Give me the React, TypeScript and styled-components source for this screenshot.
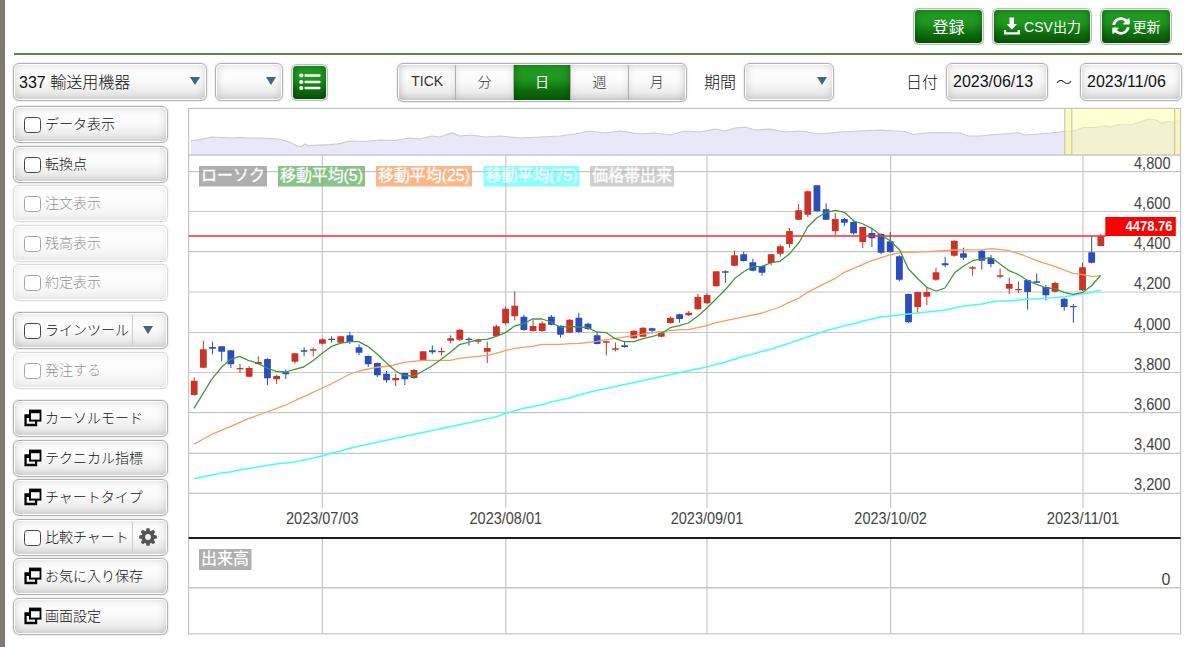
import React from "react";
import styled, { createGlobalStyle, css } from "styled-components";
import { FaSyncAlt } from "react-icons/fa";

const sans = `"Liberation Sans", "Noto Sans CJK JP", sans-serif`;

const Global = createGlobalStyle`
  * { box-sizing: border-box; }
  body { margin: 0; background: #fff; font-family: ${sans}; font-weight: 300; overflow: hidden; }
`;

const Page = styled.div`
  width: 1200px;
  height: 647px;
  border-left: 5px solid #7d7a74;
  background: #fff;
  padding-left: 8px;
  color: #222;
`;

const Header = styled.header`
  display: flex;
  justify-content: flex-end;
  align-items: flex-start;
  gap: 8px;
  height: 55px;
  width: 1168px;
  margin-left: 1px;
  padding: 8px 10px 0 0;
  border-bottom: 2px solid #66804a;
`;

const greenFace = css`
  background: linear-gradient(#22a022 0%, #1e961e 40%, #0e6a0e 75%, #065c06 100%);
  box-shadow: inset 0 0 7px rgba(0, 50, 0, 0.55), 0 0 0 1px #e8e8e8, 0 0 1px 2px #b5b5b5;
  color: #fff;
`;

const whiteFace = css`
  background: linear-gradient(#fff 0%, #fbfbfb 45%, #e9e9e9 85%, #e2e2e2 100%);
  border: 1.5px solid #b2b2b2;
  box-shadow: inset 0 0 0 1px #fff, inset 0 0 9px 1px rgba(0, 0, 0, 0.16), 0 0 2px rgba(0, 0, 0, 0.22);
`;

const GreenButton = styled.button<{ $w: number; $size?: number }>`
  ${greenFace}
  display: flex;
  align-items: center;
  justify-content: center;
  gap: 3px;
  width: ${(p) => p.$w - 4}px;
  height: 33px;
  margin: 2px;
  padding: 0 0 2px;
  border: 0;
  border-radius: 4px;
  font: ${(p) => p.$size ?? 14}px ${sans};
  white-space: nowrap;
`;

const Toolbar = styled.div`
  display: flex;
  align-items: center;
  height: 38px;
  margin-top: 8px;
  width: 1169px;
  font-size: 16px;
`;

const Field = styled.div<{ $w: number; $ml?: number }>`
  ${whiteFace}
  display: flex;
  align-items: center;
  justify-content: space-between;
  width: ${(p) => p.$w}px;
  height: 38px;
  margin-left: ${(p) => p.$ml ?? 0}px;
  padding: 0 6px 2px 5px;
  border-radius: 6px;
  color: #111;
  white-space: nowrap;
`;

const DateField = styled(Field)`
  padding: 0 0 0 6px;
`;

const Caption = styled.span<{ $ml: number }>`
  margin-left: ${(p) => p.$ml}px;
  padding-bottom: 3px;
  color: #111;
`;

const Spacer = styled.span`
  flex: 1;
`;

const ListButton = styled.button`
  ${greenFace}
  display: grid;
  place-items: center;
  width: 33px;
  height: 33px;
  margin-left: 10px;
  padding: 0;
  border: 0;
  border-radius: 4px;
`;

const Segments = styled.div`
  ${whiteFace}
  display: flex;
  width: 290px;
  height: 39px;
  margin-left: 71px;
  border-radius: 6px;
  padding: 1px;
`;

const Segment = styled.button<{ $on?: boolean }>`
  flex: 1;
  padding: 0 0 2px;
  border: 0;
  border-right: 1.5px solid #b0b0b0;
  background: none;
  box-shadow: inset 0 0 7px rgba(0, 0, 0, 0.1);
  color: #333;
  font: 300 14px ${sans};
  &:last-child { border-right: 0; }
  ${(p) => p.$on && css`
    background: linear-gradient(#22a022, #1e961e 40%, #0e6a0e 75%, #065c06);
    box-shadow: inset 0 0 7px rgba(0, 50, 0, 0.5);
    color: #fff;
    font-weight: 400;
  `}
`;

const Body = styled.div`
  display: flex;
  align-items: flex-start;
  margin-top: 5px;
`;

const Sidebar = styled.nav`
  display: flex;
  flex-direction: column;
  gap: 11px;
  width: 155px;
`;

const Group = styled.div`
  display: flex;
  flex-direction: column;
  gap: 2.6px;
`;

const SideButton = styled.div<{ $off?: boolean }>`
  ${whiteFace}
  display: flex;
  align-items: center;
  height: 37px;
  padding: 0 0 3px 9px;
  border-radius: 6px;
  font-size: 14px;
  color: #111;
  white-space: nowrap;
  opacity: ${(p) => (p.$off ? 0.48 : 1)};
`;

const Box = styled.span`
  flex: none;
  width: 17px;
  height: 16px;
  margin: 4px 4px 0 1px;
  border: 1.4px solid #444;
  border-radius: 3.5px;
  background: #fff;
`;

const Extra = styled.span`
  display: flex;
  align-items: center;
  justify-content: center;
  align-self: stretch;
  width: 31px;
  margin: 2px 4px 0 auto;
  border-left: 1px solid #ccc;
`;

const Triangle = styled.span`
  border: 5.5px solid transparent;
  border-top: 8px solid #4a5f85;
  border-bottom: 0;
`;

const ChartSvg = styled.svg`
  display: block;
  margin-left: 19px;
  font-family: ${sans};
`;

const Windows = styled.svg`
  margin: 2px 3px 0 1px;
  flex: none;
`;

const WindowsIcon = () => (
  <Windows width="18" height="18" viewBox="0 0 18 18">
    <path d="M0.4 5.2H6V9H2.7V14.8H11V11.5H13.2V17.2H0.4Z" fill="#050505" />
    <rect x="5" y="0.6" width="12.4" height="12" fill="#050505" />
    <rect x="7" y="4.2" width="8.6" height="6.4" fill="#f7f7f7" />
  </Windows>
);

const GearIcon = () => (
  <svg width="20" height="20" viewBox="-10 -10 20 20">
    {[0, 45, 90, 135].map((a) => (
      <path key={a} transform={`rotate(${a})`} d="M-2.3 -5L-1.5 -8.8H1.5L2.3 -5V5L1.5 8.8H-1.5L-2.3 5Z" fill="#555" />
    ))}
    <circle r="6.6" fill="#555" />
    <circle r="2.9" fill="#f0f0f0" />
  </svg>
);

const ListIcon = () => (
  <svg width="22" height="18" viewBox="0 0 22 18">
    {[2.5, 9, 15].map((y) => (
      <g key={y} fill="#fff">
        <circle cx="2.3" cy={y} r="2.1" />
        <rect x="5.5" y={y - 1.3} width="16" height="2.6" rx="0.8" />
      </g>
    ))}
  </svg>
);

const DownloadIcon = () => (
  <svg width="18" height="18" viewBox="0 0 18 18" fill="#fff">
    <path d="M6.5 0.5H11V7H14L8.8 12.5L3.5 7H6.5Z" />
    <path d="M1 13H3.2V15.2H14.6V13H17V17.5H1Z" />
  </svg>
);

type Item = { label: string; kind: "check" | "window"; off?: boolean; extra?: "menu" | "gear" };

const groups: Item[][] = [
  [
    { label: "データ表示", kind: "check" },
    { label: "転換点", kind: "check" },
    { label: "注文表示", kind: "check", off: true },
    { label: "残高表示", kind: "check", off: true },
    { label: "約定表示", kind: "check", off: true },
  ],
  [
    { label: "ラインツール", kind: "check", extra: "menu" },
    { label: "発注する", kind: "check", off: true },
  ],
  [
    { label: "カーソルモード", kind: "window" },
    { label: "テクニカル指標", kind: "window" },
    { label: "チャートタイプ", kind: "window" },
    { label: "比較チャート", kind: "check", extra: "gear" },
    { label: "お気に入り保存", kind: "window" },
    { label: "画面設定", kind: "window" },
  ],
];

// Candles: direction, body top, body bottom, high, low. Each block has its own
// vertical origin and the values are thirds of a pixel below it.
type Candle = ["R" | "B", number, number, number, number];
const blocks: { y: number; rows: Candle[] }[] = [
  { y: 290, rows: [
    ["R",272,315,262,317],["R",178,233,152,235],["B",171,176,155,193],["B",169,185,169,214],["B",181,223,181,234],
    ["R",234,238,222,249],["R",234,260,229,262],["R",216,222,199,224],["B",207,265,205,285],["R",258,268,254,282],
    ["B",247,253,238,267],["R",190,215,189,221],["B",181,185,172,199],["R",178,182,172,199],["R",148,161,145,163],
    ["B",146,150,139,158],["R",139,158,138,160],["B",136,156,125,162],["B",172,188,163,195],["B",198,223,196,231],
    ["B",219,256,217,261],["B",251,271,243,278],
  ] },
  { y: 270, rows: [
    ["R",324,331,311,348],["B",309,328,309,345],["R",300,324,297,327],["R",244,270,244,271],["B",241,247,226,252],
    ["R",243,247,233,257],["R",205,212,196,220],["R",179,209,177,213],["B",206,210,202,227],["R",211,215,206,222],
    ["R",234,245,215,279],["R",169,198,164,200],["R",116,160,109,163],["R",107,139,64,151],["B",140,180,134,182],
    ["R",168,183,149,185],["R",160,183,154,185],["B",140,164,135,166],["B",167,194,166,203],["R",149,188,147,189],
    ["B",143,186,128,190],["B",161,177,158,180],
  ] },
  { y: 220, rows: [
    ["B",346,372,338,373],["R",364,368,362,406],["R",385,389,368,394],["B",376,381,363,383],["R",332,355,331,356],
    ["R",323,350,322,351],["B",325,332,323,341],["R",339,350,334,352],["R",293,309,290,311],["B",283,297,281,308],
    ["R",278,286,273,288],["R",231,268,222,269],["R",225,250,220,252],["R",154,199,154,200],["B",154,158,151,188],
    ["R",106,137,92,139],["B",103,123,95,125],["B",127,152,116,154],["B",138,158,136,167],["R",103,129,102,136],
  ] },
  { y: 170, rows: [
    ["R",229,251,224,260],["R",183,222,174,233],["R",121,149,102,150],["R",64,134,61,141],["B",46,124,46,125],
    ["B",118,149,100,150],["R",147,184,129,197],["B",147,158,144,168],["B",156,190,154,194],["R",171,216,171,234],
    ["B",189,205,173,231],["B",192,248,190,253],["B",214,246,186,248],["B",259,329,256,334],["B",372,457,371,459],
  ] },
  { y: 200, rows: [
    ["R",276,321,275,338],["R",276,290,263,315],["R",217,239,203,243],["B",190,196,170,202],["R",122,167,121,170],
    ["B",160,173,143,180],["R",202,206,198,227],["B",152,182,150,209],["B",174,192,165,202],["R",226,230,206,235],
    ["R",252,266,233,282],["R",267,271,244,279],["B",240,276,239,329],["B",244,248,220,249],["B",261,286,255,300],
    ["R",249,275,245,277],["B",296,321,294,332],["B",318,322,312,368],["R",202,271,188,273],["B",157,188,108,190],
    ["R",108,138,102,139],
  ] },
];

const candles = blocks
  .flatMap((b) => b.rows.map(([c, ...v]) => ({ c, v: v.map((n) => b.y + n / 3) })))
  .map((k, i) => ({ ...k, x: 194.2 + i * 9.158 }));

// Line series use the same block form, with a horizontal origin as well.
type Seg = [number, number, number[]];
const line = (segs: Seg[]) =>
  segs
    .flatMap(([ox, oy, p]) =>
      p.flatMap((n, i) => (i % 2 ? [] : [`${(ox + n / 3).toFixed(1)},${(oy + p[i + 1] / 3).toFixed(1)}`]))
    )
    .join(" ");

const ma5 = line([
  [180, 290, [42,355,69,311,95,268,125,231,151,209,178,199,205,211,234,220,261,234,288,244,317,246,344,238,371,231,397,214,427,190,453,170,480,160,510,155,536,155,563,169,589,190]],
  [380, 270, [19,278,46,302,72,317,102,318,129,303,155,288,181,270,211,247,238,224,265,217,294,209,321,208,348,199,378,187,404,168,431,161,457,147,487,147,513,156,540,172,570,169,596,171]],
  [570, 220, [53,323,80,336,109,338,136,356,163,365,192,365,219,356,245,350,272,342,301,323,328,317,355,309,384,288,411,264,438,237,465,210,495,175,521,155,547,140,577,139]],
  [740, 170, [94,278,120,274,147,253,177,218,203,171,230,144,259,127,286,121,313,127,342,153,369,162,395,175,422,195,452,213,479,240]],
  [890, 200, [55,206,85,238,112,263,138,273,165,264,194,218,221,198,248,182,277,176,304,173,331,193,357,212,386,224,414,242,440,253,469,264,496,266,522,277,549,283,579,277,606,256,632,226]],
]);
const ma25 = line([
  [180, 290, [42,463,95,433,151,410,205,386,261,366,288,356,317,345,371,320,427,294,453,282,510,252,536,243,589,232]],
  [380, 270, [0,291,30,288,72,277,129,271,211,271,238,265,321,256,348,250,378,241,404,235,457,229,487,223,540,223]],
  [570, 220, [0,371,30,370,80,364,109,359,192,347,245,338,328,329,355,329,411,317,438,308]],
  [740, 170, [0,443,67,429,120,411,147,397,177,384,203,367,259,338,286,325,313,307,395,272,452,254,479,248]],
  [890, 200, [55,157,112,155,194,150,277,149,304,146,357,152,386,161,414,171,440,182,496,200,549,220,579,224,606,230,632,227]],
]);
const ma75 = line([
  [180, 290, [42,566,125,549,151,546,178,540,288,522,344,516,427,498,453,490,480,484,510,475,536,469,619,451]],
  [380, 270, [305,450,348,440,378,430,431,415,487,404,513,396,570,383]],
  [570, 220, [60,516,365,450,411,441,438,433,465,427,521,409,547,403,577,394,603,388]],
  [740, 170, [265,480,286,475,313,467,342,461,369,453,422,441]],
  [890, 200, [0,348,55,342,85,339,165,330,221,318,277,312,304,306,331,303,357,303,414,297,440,297,522,290,579,281,606,277,632,271]],
]);

const overview =
  "191,140.7 200,139.7 212,137 222,137.5 233,138 240,137.3 247,138 260,138 277,139 283,140 290,142.3 297,146 302,146.3 305,144 308,145.6 330,144.7 340,143.7 350,141 365,141.5 380,140 395,140.5 410,138 420,139 432,136 440,137 452,133 460,136 472,135 485,137 500,136 520,138 540,137 560,136 575,134 590,131 605,133 620,131 640,134 655,133 670,135 685,131 700,132 715,129 725,131 735,128 745,127 755,130 770,129 785,132 800,131 820,134 840,132 860,131 880,130 895,131 905,131.5 913,134.5 925,133 935,132.5 960,133 968,136 980,136 995,134.5 1010,133.5 1018,132.5 1025,135 1045,133.5 1066,131.5 1075,130.5 1083,127.5 1095,127.5 1105,125.5 1110,127 1118,124.5 1130,125 1140,122 1148,119 1155,119.5 1162,123 1168,121.5 1175,122.5 1180,120";

const grid = [171.7, 211.5, 251.7, 292, 332.5, 372.5, 412.7, 453.3, 493.3];
const dates: [number, string][] = [
  [322.3, "2023/07/03"], [505.8, "2023/08/01"], [707, "2023/09/01"], [890.6, "2023/10/02"], [1083, "2023/11/01"],
];
const legends: [number, number, string, string][] = [
  [199, 68, "#a9a9a9", "ローソク"],
  [278, 87, "#7fbf7f", "移動平均(5)"],
  [376, 96, "#ffb07c", "移動平均(25)"],
  [483.5, 96, "#80ffff", "移動平均(75)"],
  [590, 84, "#cccccc", "価格帯出来"],
];

const Chart = () => (
  <ChartSvg width="996" height="530" viewBox="187 106 996 530">
    <polygon points={`191,154.5 ${overview} 1180,154.5`} fill="#e9e8f8" />
    <polyline points={overview} fill="none" stroke="#ccc" strokeWidth="1.2" />
    <rect x="1065" y="108" width="115.5" height="47" fill="#ffffa0" fillOpacity="0.45" />
    <rect x="1065" y="108" width="6.5" height="47" fill="#ffff80" fillOpacity="0.35" />
    <rect x="1174.5" y="108" width="6" height="47" fill="#ffff80" fillOpacity="0.35" />
    <g stroke="#c6c6c6" strokeWidth="1.2" fill="none">
      <path d="M1064.8 108V155M1071.8 108V155M1174.6 108V155" />
      <path d="M188.6 108.3H1180.6V633.8H188.6Z" />
      <path d="M188.6 155H1180.6M188.6 587.7H1180.6" strokeWidth="1.5" />
      {grid.map((y) => <path key={y} d={`M188.6 ${y}H1180.6`} />)}
      {dates.map(([x]) => <path key={x} d={`M${x} 155V508M${x} 539V633`} />)}
    </g>
    <path d="M188.6 537.9H1180.6" stroke="#1c1c1c" strokeWidth="2" />
    {candles.map(({ c, v, x }) => (
      <g key={x} fill={c === "R" ? "#ca3428" : "#2a4dc0"}>
        <rect x={x - 0.5} y={v[2]} width="1" height={v[3] - v[2]} />
        <rect x={x - 3.4} y={v[0]} width="6.8" height={v[1] - v[0]} rx="0.4" />
      </g>
    ))}
    <path d="M188.6 236H1106" stroke="#ff2a2a" strokeWidth="1.3" />
    <g fill="none" strokeWidth="1.3" strokeLinejoin="round">
      <polyline points={ma75} stroke="#40ffff" strokeWidth="1.5" />
      <polyline points={ma25} stroke="#ff9a5c" />
      <polyline points={ma5} stroke="#3f9a3f" />
    </g>
    {legends.map(([x, w, fill, label]) => (
      <g key={label}>
        <rect x={x} y="166" width={w} height="20.5" fill={fill} fillOpacity="0.93" />
        <text x={x + 2} y="180.5" fontSize="16" fontWeight="400" fill="#fff" stroke="#fff" strokeWidth="0.3" textLength={w - 4} lengthAdjust="spacingAndGlyphs">{label}</text>
      </g>
    ))}
    <path d="M199 171.7H267M278 171.7H365M376 171.7H472M483.5 171.7H579.5M590 171.7H674M322.3 166V186.5M505.8 166V186.5" stroke="#888" strokeOpacity="0.22" strokeWidth="1.2" />
    <rect x="199" y="549" width="52.5" height="21" fill="#b0b0b0" />
    <text x="201" y="563.5" fontSize="16" fontWeight="400" fill="#fff" stroke="#fff" strokeWidth="0.2" textLength="48">出来高</text>
    <g fontSize="16" fontWeight="400" fill="#444" textAnchor="end">
      {grid.map((y, i) => (
        <text key={y} x="1170.5" y={y - 3} textLength="36.5" lengthAdjust="spacingAndGlyphs">
          {(4800 - i * 200).toLocaleString("en-US")}
        </text>
      ))}
      <text x="1170.5" y="584.5">0</text>
    </g>
    <g fontSize="16" fill="#444" textAnchor="middle">
      {dates.map(([x, d]) => <text key={d} x={x} y="524.3" textLength="72.5" lengthAdjust="spacingAndGlyphs">{d}</text>)}
    </g>
    <rect x="1105.3" y="217" width="70.5" height="19" fill="#f00" />
    <text x="1172.5" y="231" fontSize="14" fontWeight="bold" fill="#fff" textAnchor="end" textLength="47" lengthAdjust="spacingAndGlyphs">4478.76</text>
  </ChartSvg>
);

export default function App() {
  return (
    <Page>
      <Global />
      <Header>
        <GreenButton $w={71} $size={16}>登録</GreenButton>
        <GreenButton $w={100}><DownloadIcon />CSV出力</GreenButton>
        <GreenButton $w={72}><FaSyncAlt size={18} />更新</GreenButton>
      </Header>
      <Toolbar>
        <Field $w={194}>337 輸送用機器<Triangle /></Field>
        <Field $w={68} $ml={8}><span /><Triangle /></Field>
        <ListButton><ListIcon /></ListButton>
        <Segments>
          {["TICK", "分", "日", "週", "月"].map((s) => <Segment key={s} $on={s === "日"}>{s}</Segment>)}
        </Segments>
        <Caption $ml={17}>期間</Caption>
        <Field $w={90} $ml={8}><span /><Triangle /></Field>
        <Spacer />
        <Caption $ml={0}>日付</Caption>
        <DateField $w={102} $ml={8}>2023/06/13</DateField>
        <Caption $ml={8}>～</Caption>
        <DateField $w={102} $ml={8}>2023/11/06</DateField>
      </Toolbar>
      <Body>
        <Sidebar>
          {groups.map((g, i) => (
            <Group key={i}>
              {g.map((it) => (
                <SideButton key={it.label} $off={it.off}>
                  {it.kind === "check" ? <Box /> : <WindowsIcon />}
                  {it.label}
                  {it.extra && (
                    <Extra>{it.extra === "menu" ? <Triangle /> : <GearIcon />}</Extra>
                  )}
                </SideButton>
              ))}
            </Group>
          ))}
        </Sidebar>
        <Chart />
      </Body>
    </Page>
  );
}
